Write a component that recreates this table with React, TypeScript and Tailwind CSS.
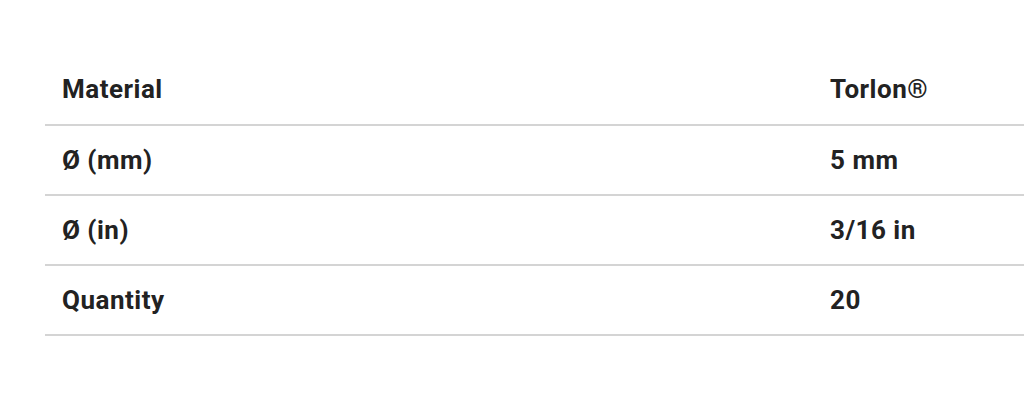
import React from 'react'

const rows = [
    { label: 'Material', value: 'Torlon®' },
    { label: 'Ø (mm)', value: '5 mm' },
    { label: 'Ø (in)', value: '3/16 in' },
    { label: 'Quantity', value: '20' },
]

export default function App() {
    return (
        <div className="w-[1024px] h-[406px] bg-white pt-[55px] pl-[45px]" style={{ fontFamily: 'Roboto, sans-serif' }}>
            <table className="w-full border-collapse text-[#222222]">
                <tbody>
                    {rows.map((row) => (
                        <tr key={row.label} className="h-[70px] border-b-2 border-[#d4d4d4]">
                            <td className="w-[785px] pl-[17px] text-[26px] font-bold tracking-[0.5px]">{row.label}</td>
                            <td className="text-[26px] font-bold tracking-[0.5px]">{row.value}</td>
                        </tr>
                    ))}
                </tbody>
            </table>
        </div>
    )
}
